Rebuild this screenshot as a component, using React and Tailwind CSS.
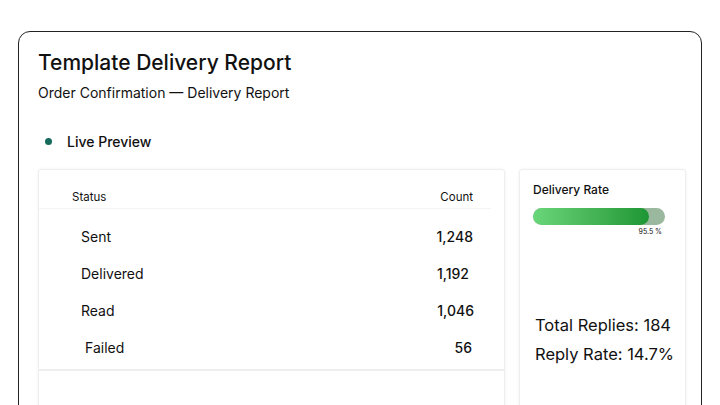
export default function App() {
  const rows = [
    { label: 'Sent', count: '1,248', pl: 'pl-[42px]', pr: 'pr-[31px]' },
    { label: 'Delivered', count: '1,192', pl: 'pl-[42px]', pr: 'pr-[35px]' },
    { label: 'Read', count: '1,046', pl: 'pl-[42px]', pr: 'pr-[30px]' },
    { label: 'Failed', count: '56', pl: 'pl-[46px]', pr: 'pr-[32px]' },
  ]

  return (
    <div className="w-[720px] h-[405px] overflow-hidden bg-white pt-[31px] pl-[18px] font-['Inter',sans-serif] text-[#111]">
      <div className="w-[684px] h-[400px] border border-[#222] rounded-[12px] pl-[19px] pt-[18px]">
        {/* Header */}
        <h1 className="text-[21px] font-medium leading-[26px]">Template Delivery Report</h1>
        <p className="text-[14px] leading-[18px] mt-[8px]">Order Confirmation — Delivery Report</p>

        <div className="flex items-center mt-[30px] h-[18px]">
          <span className="w-[7px] h-[7px] rounded-full bg-[#146b5b] ml-[7px]" />
          <span className="ml-[15px] text-[14px] font-medium">Live Preview</span>
        </div>

        <div className="flex gap-[14px] mt-[19px]">
          {/* Table card */}
          <div className="w-[467px] h-[250px] border border-[#eeeeee] rounded-[3px] shadow-[0_0_3px_rgba(0,0,0,0.06)] pt-[17px]">
            <div className="w-[452px] flex justify-between items-center pl-[33px] pr-[18px] text-[11.5px] h-[22px] border-b border-[#f4f4f4]">
              <span>Status</span>
              <span>Count</span>
            </div>
            <div className="pt-[9px] border-b-2 border-[#eeeeee] pb-[3px]">
              {rows.map((r) => (
                <div key={r.label} className={`flex justify-between items-center h-[37px] text-[14px] ${r.pl} ${r.pr}`}>
                  <span>{r.label}</span>
                  <span className="font-medium">{r.count}</span>
                </div>
              ))}
            </div>
          </div>

          {/* Rate card */}
          <div className="w-[167px] h-[250px] border border-[#eeeeee] rounded-[3px] shadow-[0_0_3px_rgba(0,0,0,0.06)] pt-[12px] pl-[13px]">
            <p className="text-[12px] font-medium leading-[16px]">Delivery Rate</p>
            <div className="mt-[10px] w-[132px] h-[17px] rounded-full bg-[#9ab89e] overflow-hidden">
              <div className="h-full w-[116px] rounded-full bg-gradient-to-r from-[#6ad67a] to-[#1d9634]" />
            </div>
            <p className="w-[129px] text-right text-[7px] leading-[10px] mt-[2px]">95.5 %</p>
            <div className="mt-[74px] pl-[2px] text-[16.5px] leading-[29px]">
              <p>Total Replies: 184</p>
              <p>Reply Rate: 14.7%</p>
            </div>
          </div>
        </div>
      </div>
    </div>
  )
}
